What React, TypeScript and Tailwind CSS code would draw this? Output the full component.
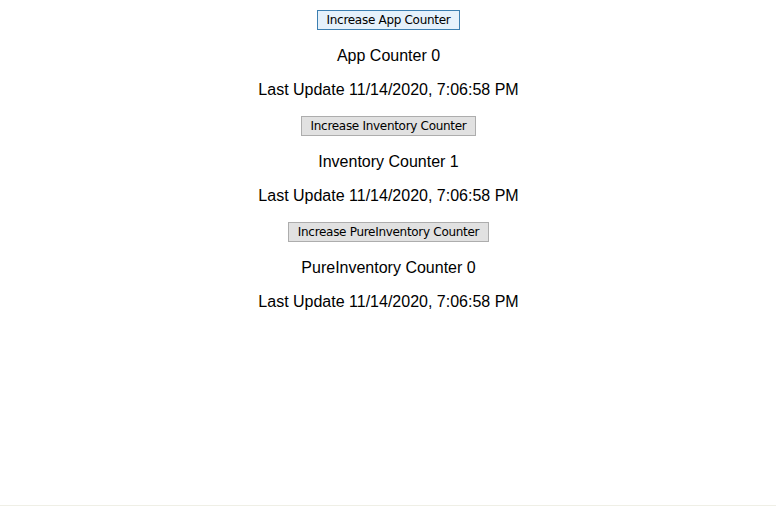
import React, { useState } from 'react';

const stamp = '11/14/2020, 7:06:58 PM';

function CounterBlock({
  label,
  count,
  onIncrease,
  focused,
}: {
  label: string;
  count: number;
  onIncrease: () => void;
  focused?: boolean;
}) {
  return (
    <div className="flex flex-col items-center">
      <button
        onClick={onIncrease}
        className={
          focused
            ? 'h-[20px] px-[9px] border border-[#3c7fb1] bg-[#e5f1fb] text-[12px] leading-[18px] text-black font-["DejaVu_Sans",Tahoma,sans-serif] tracking-[-0.3px]'
            : 'h-[20px] px-[9px] border border-[#adadad] bg-[#e1e1e1] text-[12px] leading-[18px] text-black font-["DejaVu_Sans",Tahoma,sans-serif] tracking-[-0.3px]'
        }
      >
        Increase {label} Counter
      </button>
      <p className="mt-[17px] leading-[18px]">
        {label} Counter {count}
      </p>
      <p className="mt-4 leading-[18px]">Last Update {stamp}</p>
    </div>
  );
}

export default function App() {
  const [app, setApp] = useState(0);
  const [inventory, setInventory] = useState(1);
  const [pure, setPure] = useState(0);

  return (
    <div className="h-[507px] bg-white text-[16px] text-black font-['Liberation_Sans',Arial,sans-serif] flex flex-col">
      <div className="flex-1 pt-[10px] pl-px flex flex-col gap-[17px]">
        <CounterBlock label="App" count={app} onIncrease={() => setApp(app + 1)} focused />
        <CounterBlock label="Inventory" count={inventory} onIncrease={() => setInventory(inventory + 1)} />
        <CounterBlock label="PureInventory" count={pure} onIncrease={() => setPure(pure + 1)} />
      </div>
      <div className="h-px bg-[#efefe6] mb-px" />
    </div>
  );
}
